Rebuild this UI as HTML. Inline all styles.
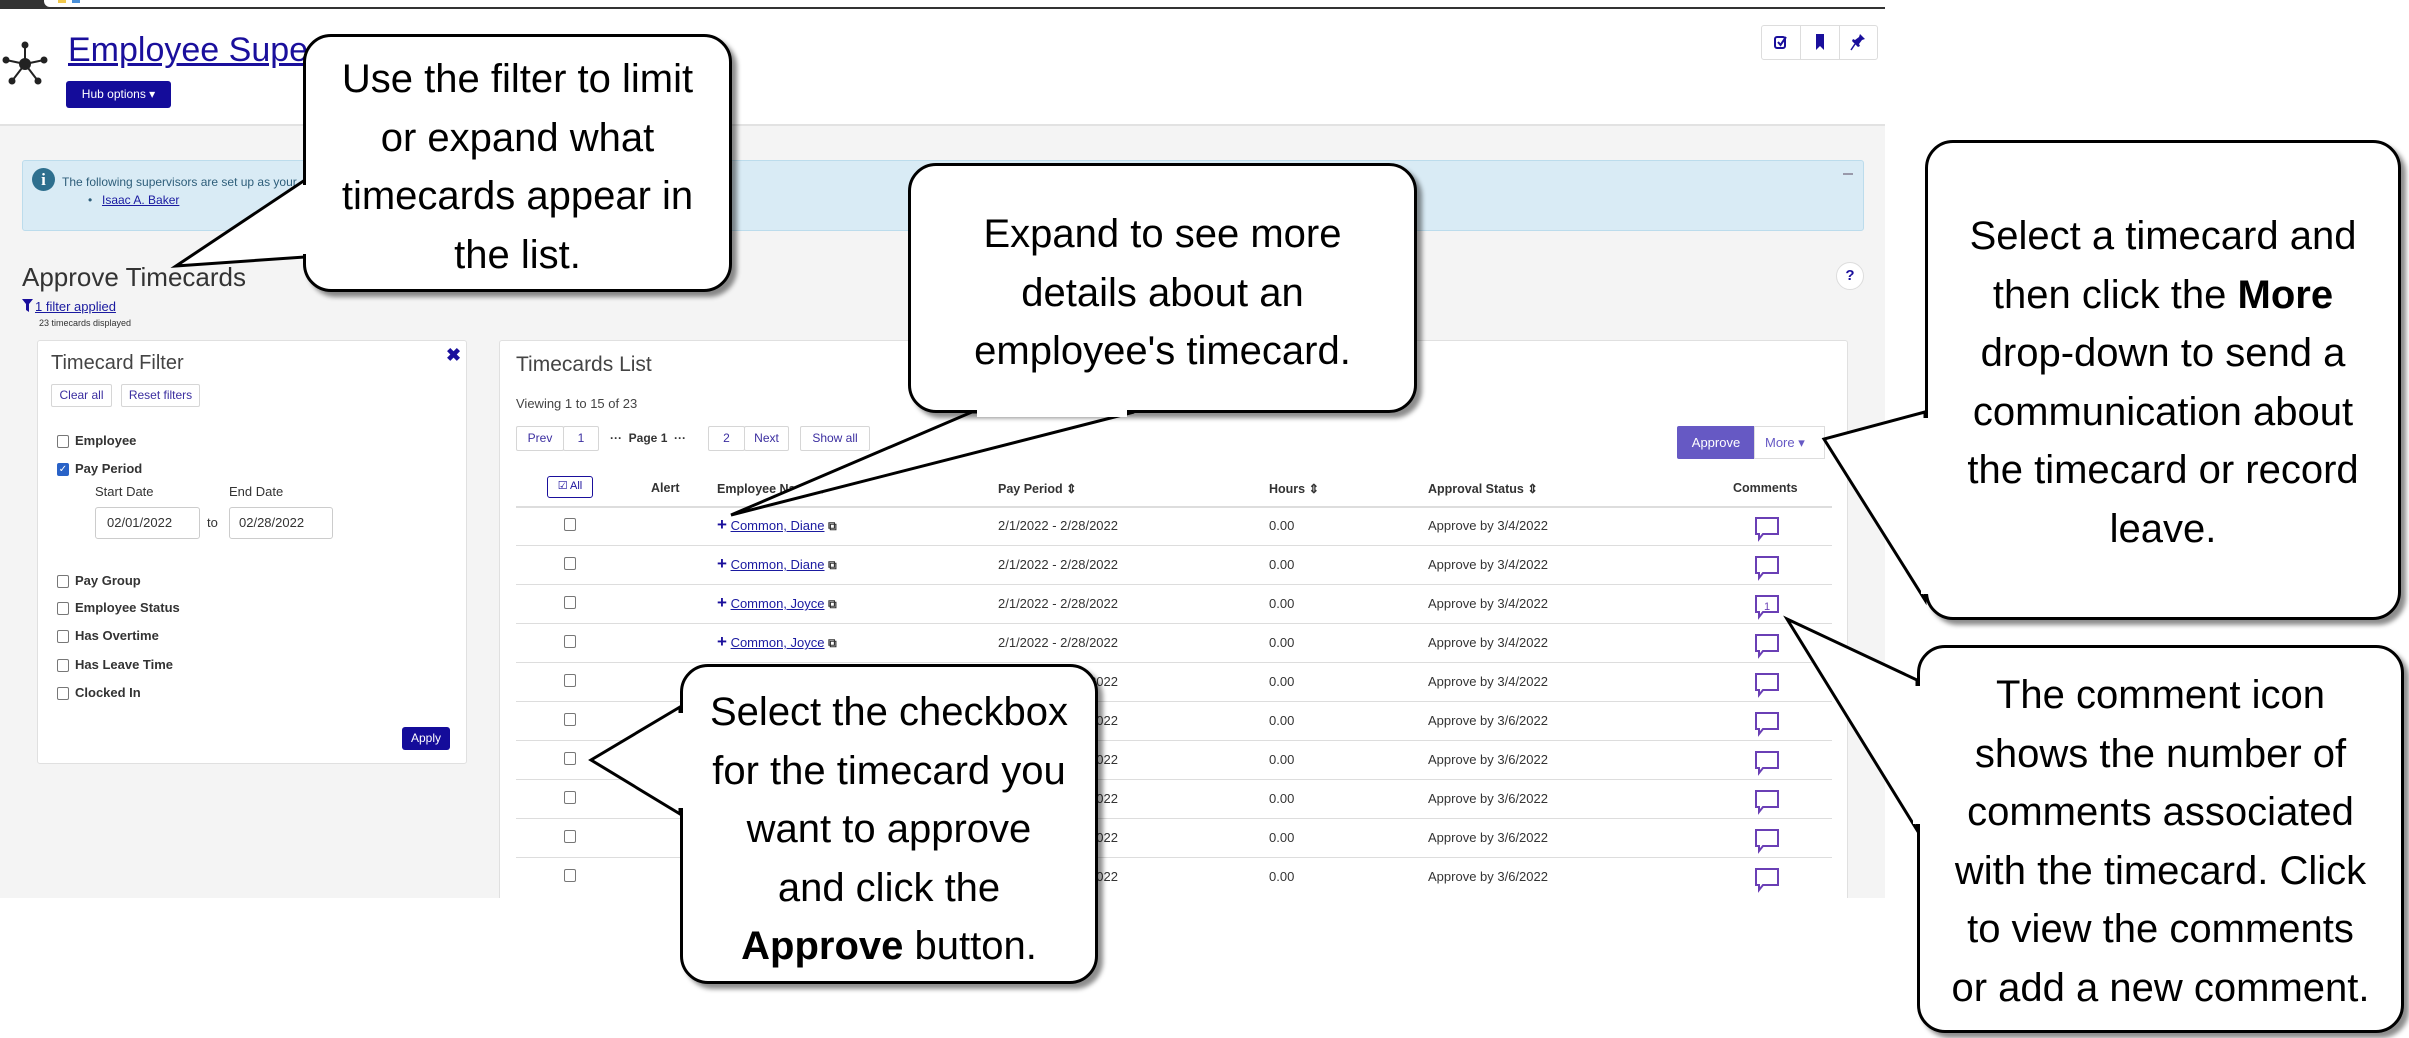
<!DOCTYPE html>
<html><head><meta charset="utf-8">
<style>
*{margin:0;padding:0;box-sizing:border-box}
body{width:2409px;height:1038px;position:relative;overflow:hidden;background:#fff;font-family:"Liberation Sans",sans-serif;color:#333}
.a{position:absolute}
.gray{left:0;top:124px;width:1885px;height:774px;background:#f4f4f4;border-top:2px solid #e2e2e2}
.panel{background:#fff;border:1px solid #e0e0e0;border-radius:3px}
.btn{position:absolute;border:1px solid #d6d6d6;background:#fff;color:#3b2ea0;font-size:12px;text-align:center;border-radius:2px}
.cb{position:absolute;width:12px;height:13px;border:1px solid #777;border-radius:2px;background:#fff}
.lbl{position:absolute;font-size:13px;font-weight:bold;color:#333}
.cell{position:absolute;font-size:13px;color:#333;white-space:nowrap}
.lnk{color:#1a1aa0;text-decoration:underline}
.hdr{position:absolute;font-size:12.5px;font-weight:bold;color:#333;top:481px}
.rowline{position:absolute;left:516px;width:1316px;height:1px;background:#ddd}
.co{position:absolute;background:#fff;border:3px solid #000;border-radius:28px;box-shadow:5px 5px 5px rgba(0,0,0,.45);text-align:center;font-size:40px;line-height:58.5px;color:#000;z-index:3}
</style></head><body>
<div class="a" style="left:0;top:0;width:1885px;height:9px;background:#333"></div>
<div class="a" style="left:44px;top:0;width:1841px;height:7px;background:#fff;border-radius:0 0 0 6px"></div>
<div class="a" style="left:58px;top:0;width:8px;height:3px;background:#f2c94c"></div>
<div class="a" style="left:72px;top:0;width:8px;height:3px;background:#4a90d9"></div>

<svg class="a" style="left:2px;top:40px" width="46" height="48" viewBox="0 0 46 48">
<g stroke="#222" stroke-width="2"><line x1="23" y1="24" x2="23" y2="5"/><line x1="23" y1="24" x2="4" y2="20"/><line x1="23" y1="24" x2="42" y2="20"/><line x1="23" y1="24" x2="10" y2="41"/><line x1="23" y1="24" x2="36" y2="41"/></g>
<g fill="#222"><circle cx="23" cy="24" r="6"/><circle cx="23" cy="5" r="3.5"/><circle cx="4" cy="20" r="3.5"/><circle cx="42" cy="20" r="3.5"/><circle cx="10" cy="41" r="3.5"/><circle cx="36" cy="41" r="3.5"/></g></svg>
<div class="a" style="left:68px;top:31px;font-size:34px;color:#1a0f9c;text-decoration:underline;white-space:nowrap">Employee Supervisor Hub</div>
<div class="a" style="left:66px;top:81px;width:105px;height:27px;background:#140c9a;border-radius:3px;color:#fff;font-size:12px;line-height:27px;text-align:center">Hub options ▾</div>
<div class="a" style="left:1761px;top:25px;width:117px;height:35px;border:1px solid #ddd;border-radius:3px;background:#fff"></div>
<div class="a" style="left:1800px;top:25px;width:1px;height:35px;background:#ddd"></div>
<div class="a" style="left:1839px;top:25px;width:1px;height:35px;background:#ddd"></div>
<svg class="a" style="left:1773px;top:34px" width="16" height="16" viewBox="0 0 16 16"><rect x="2" y="3" width="10" height="11" rx="2" fill="none" stroke="#1a0f9c" stroke-width="2"/><path d="M5 8l2.5 3L13 3" fill="none" stroke="#1a0f9c" stroke-width="2"/></svg>
<svg class="a" style="left:1814px;top:33px" width="12" height="18" viewBox="0 0 12 18"><path d="M2 1h8v16l-4-4-4 4z" fill="#1a0f9c"/></svg>
<svg class="a" style="left:1850px;top:33px" width="16" height="18" viewBox="0 0 16 18"><path d="M10 1l5 5-3 1-3 4 1 2-2 1-6-6 1-2 2 1 4-3z" fill="#1a0f9c"/><line x1="5" y1="11" x2="1" y2="17" stroke="#1a0f9c" stroke-width="1.5"/></svg>

<div class="a gray"></div>

<div class="a" style="left:22px;top:160px;width:1842px;height:71px;background:#d9ebf5;border:1px solid #bcdcec;border-radius:3px"></div>
<div class="a" style="left:32px;top:168px;width:23px;height:23px;border-radius:50%;background:#2e6f8e;color:#fff;font-weight:bold;font-size:17px;text-align:center;line-height:23px;font-family:'Liberation Serif',serif">i</div>
<div class="a" style="left:62px;top:175px;font-size:12px;color:#2e5e7a;white-space:nowrap">The following supervisors are set up as your</div>
<div class="a" style="left:88px;top:193px;font-size:12px;color:#2e5e7a">•</div>
<div class="a lnk" style="left:102px;top:193px;font-size:12px">Isaac A. Baker</div>
<div class="a" style="left:1843px;top:173px;width:10px;height:2px;background:#99a"></div>

<div class="a" style="left:22px;top:262px;font-size:26px;color:#333;white-space:nowrap">Approve Timecards</div>
<svg class="a" style="left:22px;top:299px" width="11" height="13" viewBox="0 0 11 13"><path d="M0 0h11L7 5v8L4 11V5z" fill="#1a0f9c"/></svg>
<div class="a lnk" style="left:35px;top:299px;font-size:13px">1 filter applied</div>
<div class="a" style="left:39px;top:318px;font-size:9px;color:#333">23 timecards displayed</div>
<div class="a" style="left:1836px;top:262px;width:28px;height:28px;border-radius:50%;background:#fff;border:1px solid #ddd;color:#1a0f9c;font-weight:bold;font-size:15px;text-align:center;line-height:26px">?</div>

<div class="a panel" style="left:37px;top:340px;width:430px;height:424px"></div>
<div class="a" style="left:51px;top:352px;font-size:20px;color:#444">Timecard Filter</div>
<div class="a" style="left:446px;top:345px;font-size:18px;font-weight:bold;color:#1a0f9c">✖</div>
<div class="btn" style="left:51px;top:384px;width:61px;height:23px;line-height:21px">Clear all</div>
<div class="btn" style="left:121px;top:384px;width:79px;height:23px;line-height:21px">Reset filters</div>
<div class="cb" style="left:57px;top:435px"></div><div class="lbl" style="left:75px;top:433px">Employee</div>
<div class="cb" style="left:57px;top:463px;background:#2962c7;border-color:#2962c7;color:#fff;font-size:10px;line-height:11px;text-align:center">✓</div><div class="lbl" style="left:75px;top:461px">Pay Period</div>
<div class="a" style="left:95px;top:484px;font-size:13px">Start Date</div>
<div class="a" style="left:229px;top:484px;font-size:13px">End Date</div>
<div class="a" style="left:95px;top:507px;width:105px;height:32px;border:1px solid #ccc;border-radius:3px;background:#fff;font-size:13px;line-height:30px;padding-left:11px">02/01/2022</div>
<div class="a" style="left:207px;top:515px;font-size:13px">to</div>
<div class="a" style="left:229px;top:507px;width:104px;height:32px;border:1px solid #ccc;border-radius:3px;background:#fff;font-size:13px;line-height:30px;padding-left:9px">02/28/2022</div>
<div class="cb" style="left:57px;top:575px"></div><div class="lbl" style="left:75px;top:573px">Pay Group</div>
<div class="cb" style="left:57px;top:602px"></div><div class="lbl" style="left:75px;top:600px">Employee Status</div>
<div class="cb" style="left:57px;top:630px"></div><div class="lbl" style="left:75px;top:628px">Has Overtime</div>
<div class="cb" style="left:57px;top:659px"></div><div class="lbl" style="left:75px;top:657px">Has Leave Time</div>
<div class="cb" style="left:57px;top:687px"></div><div class="lbl" style="left:75px;top:685px">Clocked In</div>
<div class="a" style="left:402px;top:727px;width:48px;height:23px;background:#140c9a;border-radius:3px;color:#fff;font-size:12px;text-align:center;line-height:23px">Apply</div>

<div class="a panel" style="left:499px;top:340px;width:1349px;height:558px;border-bottom:none;border-radius:3px 3px 0 0"></div>
<div class="a" style="left:516px;top:353px;font-size:21px;color:#444">Timecards List</div>
<div class="a" style="left:516px;top:396px;font-size:13px;color:#444">Viewing 1 to 15 of 23</div>
<div class="btn" style="left:516px;top:426px;width:48px;height:25px;line-height:23px">Prev</div>
<div class="btn" style="left:563px;top:426px;width:36px;height:25px;line-height:23px">1</div>
<div class="a" style="left:610px;top:431px;font-size:12px;color:#333;white-space:nowrap"><b>···</b>&nbsp;&nbsp;<b>Page 1</b>&nbsp;&nbsp;<b>···</b></div>
<div class="btn" style="left:708px;top:426px;width:37px;height:25px;line-height:23px">2</div>
<div class="btn" style="left:744px;top:426px;width:45px;height:25px;line-height:23px">Next</div>
<div class="btn" style="left:800px;top:426px;width:70px;height:25px;line-height:23px">Show all</div>
<div class="a" style="left:1677px;top:426px;width:78px;height:33px;background:#6659c4;color:#fff;font-size:13px;text-align:center;line-height:33px;border-radius:2px 0 0 2px">Approve</div>
<div class="a" style="left:1754px;top:426px;width:71px;height:33px;background:#fff;border:1px solid #ddd;color:#6659c4;font-size:13px;line-height:31px;padding-left:10px">More ▾</div>

<div class="a" style="left:547px;top:476px;width:46px;height:22px;border:1.5px solid #1a0f9c;border-radius:3px;font-size:11px;color:#1a0f9c;text-align:center;line-height:19px;background:#fff">☑ All</div>
<div class="hdr" style="left:651px">Alert</div>
<div class="hdr" style="left:717px">Employee Name ⇕</div>
<div class="hdr" style="left:998px">Pay Period ⇕</div>
<div class="hdr" style="left:1269px">Hours ⇕</div>
<div class="hdr" style="left:1428px">Approval Status ⇕</div>
<div class="hdr" style="left:1733px">Comments</div>
<div class="rowline" style="top:506px;height:2px;background:#ddd"></div>

<div class="cb" style="left:564px;top:518px"></div><div class="cell" style="left:717px;top:515px"><b style="color:#1a0f9c;font-size:17px">+</b>&nbsp;<span class="lnk">Common, Diane</span> <b style="font-size:12px">⧉</b></div><div class="cell" style="left:998px;top:518px">2/1/2022 - 2/28/2022</div><div class="cell" style="left:1269px;top:518px">0.00</div><div class="cell" style="left:1428px;top:518px">Approve by 3/4/2022</div><div class="rowline" style="top:545px"></div>
<div class="cb" style="left:564px;top:557px"></div><div class="cell" style="left:717px;top:554px"><b style="color:#1a0f9c;font-size:17px">+</b>&nbsp;<span class="lnk">Common, Diane</span> <b style="font-size:12px">⧉</b></div><div class="cell" style="left:998px;top:557px">2/1/2022 - 2/28/2022</div><div class="cell" style="left:1269px;top:557px">0.00</div><div class="cell" style="left:1428px;top:557px">Approve by 3/4/2022</div><div class="rowline" style="top:584px"></div>
<div class="cb" style="left:564px;top:596px"></div><div class="cell" style="left:717px;top:593px"><b style="color:#1a0f9c;font-size:17px">+</b>&nbsp;<span class="lnk">Common, Joyce</span> <b style="font-size:12px">⧉</b></div><div class="cell" style="left:998px;top:596px">2/1/2022 - 2/28/2022</div><div class="cell" style="left:1269px;top:596px">0.00</div><div class="cell" style="left:1428px;top:596px">Approve by 3/4/2022</div><div class="rowline" style="top:623px"></div>
<div class="cb" style="left:564px;top:635px"></div><div class="cell" style="left:717px;top:632px"><b style="color:#1a0f9c;font-size:17px">+</b>&nbsp;<span class="lnk">Common, Joyce</span> <b style="font-size:12px">⧉</b></div><div class="cell" style="left:998px;top:635px">2/1/2022 - 2/28/2022</div><div class="cell" style="left:1269px;top:635px">0.00</div><div class="cell" style="left:1428px;top:635px">Approve by 3/4/2022</div><div class="rowline" style="top:662px"></div>
<div class="cb" style="left:564px;top:674px"></div><div class="cell" style="left:998px;top:674px">2/1/2022 - 2/28/2022</div><div class="cell" style="left:1269px;top:674px">0.00</div><div class="cell" style="left:1428px;top:674px">Approve by 3/4/2022</div><div class="rowline" style="top:701px"></div>
<div class="cb" style="left:564px;top:713px"></div><div class="cell" style="left:998px;top:713px">2/21/2022 - 3/6/2022</div><div class="cell" style="left:1269px;top:713px">0.00</div><div class="cell" style="left:1428px;top:713px">Approve by 3/6/2022</div><div class="rowline" style="top:740px"></div>
<div class="cb" style="left:564px;top:752px"></div><div class="cell" style="left:998px;top:752px">2/21/2022 - 3/6/2022</div><div class="cell" style="left:1269px;top:752px">0.00</div><div class="cell" style="left:1428px;top:752px">Approve by 3/6/2022</div><div class="rowline" style="top:779px"></div>
<div class="cb" style="left:564px;top:791px"></div><div class="cell" style="left:998px;top:791px">2/21/2022 - 3/6/2022</div><div class="cell" style="left:1269px;top:791px">0.00</div><div class="cell" style="left:1428px;top:791px">Approve by 3/6/2022</div><div class="rowline" style="top:818px"></div>
<div class="cb" style="left:564px;top:830px"></div><div class="cell" style="left:998px;top:830px">2/21/2022 - 3/6/2022</div><div class="cell" style="left:1269px;top:830px">0.00</div><div class="cell" style="left:1428px;top:830px">Approve by 3/6/2022</div><div class="rowline" style="top:857px"></div>
<div class="cb" style="left:564px;top:869px"></div><div class="cell" style="left:998px;top:869px">2/21/2022 - 3/6/2022</div><div class="cell" style="left:1269px;top:869px">0.00</div><div class="cell" style="left:1428px;top:869px">Approve by 3/6/2022</div>

<svg class="a" style="left:0;top:0" width="2409" height="1038">
<defs><path id="bub" d="M0 0h22v16H7l-4 5v-5H0z" fill="#fff" stroke="#6a3fb5" stroke-width="2"/></defs>
<use href="#bub" x="1756" y="518"/><use href="#bub" x="1756" y="557"/><use href="#bub" x="1756" y="596"/><use href="#bub" x="1756" y="635"/><use href="#bub" x="1756" y="674"/><use href="#bub" x="1756" y="713"/><use href="#bub" x="1756" y="752"/><use href="#bub" x="1756" y="791"/><use href="#bub" x="1756" y="830"/><use href="#bub" x="1756" y="869"/>
<text x="1764" y="610" font-size="11" fill="#6a3fb5" font-family="Liberation Sans">1</text>
</svg>

<svg class="a" style="left:0;top:0;z-index:2" width="2409" height="1038">
<g fill="#fff" stroke="#000" stroke-width="3" stroke-linejoin="miter">
<polygon points="305,180 176,266 305,257"/>
<polygon points="972,412 731,515 1134,412"/>
<polygon points="1925,412 1824,439 1925,600"/>
<polygon points="1917,680 1787,619 1917,830"/>
<polygon points="680,707 591,760 680,814"/>
</g></svg>

<div class="co" style="left:303px;top:34px;width:429px;height:258px;padding-top:13px">Use the filter to limit<br>or expand what<br>timecards appear in<br>the list.</div>
<div class="co" style="left:908px;top:163px;width:509px;height:250px;padding-top:39px">Expand to see more<br>details about an<br>employee's timecard.</div>
<div class="co" style="left:1925px;top:140px;width:476px;height:480px;padding-top:64px">Select a timecard and<br>then click the <b>More</b><br>drop-down to send a<br>communication about<br>the timecard or record<br>leave.</div>
<div class="co" style="left:1917px;top:645px;width:487px;height:388px;padding-top:18px">The comment icon<br>shows the number of<br>comments associated<br>with the timecard. Click<br>to view the comments<br>or add a new comment.</div>
<div class="co" style="left:680px;top:664px;width:418px;height:320px;padding-top:16px">Select the checkbox<br>for the timecard you<br>want to approve<br>and click the<br><b>Approve</b> button.</div>

<svg class="a" style="left:0;top:0;z-index:4" width="2409" height="1038">
<g fill="#fff">
<rect x="301" y="185" width="9" height="69"/>
<rect x="977" y="407" width="150" height="10"/>
<rect x="1921" y="418" width="9" height="176"/>
<rect x="1913" y="686" width="9" height="138"/>
<rect x="676" y="713" width="9" height="95"/>
</g></svg>
</body></html>
